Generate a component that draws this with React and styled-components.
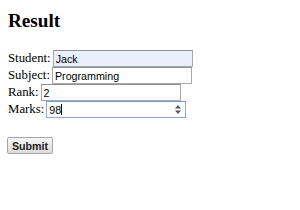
import React from "react";
import styled, { createGlobalStyle } from "styled-components";

const GlobalStyle = createGlobalStyle`
  html, body {
    margin: 0;
    background: #fff;
  }
  body {
    padding: 8px;
    font-family: "Liberation Serif", "Times New Roman", serif;
    font-size: 12.8px;
    color: #000;
  }
`;

const Title = styled.h2`
  margin: 2px 0 18px;
  font-size: 19.2px;
  line-height: 22px;
  font-weight: bold;
`;

const Form = styled.form`
  display: flex;
  flex-direction: column;
  align-items: flex-start;
`;

const Row = styled.div`
  display: flex;
  align-items: center;
  height: 17px;
  gap: 2px;
`;

const Label = styled.label`
  font-size: 12.8px;
  line-height: 15px;
`;

const FieldWrap = styled.span`
  position: relative;
  display: inline-flex;
`;

const Field = styled.input`
  box-sizing: border-box;
  width: 140px;
  height: 16.5px;
  margin: 0;
  padding: 0 2px;
  font-family: "Liberation Sans", Arial, sans-serif;
  font-size: 10.7px;
  color: #000;
  background: ${(p) => (p.$filled ? "#e8f0fe" : "#fff")};
  border: 1px solid ${(p) => (p.$active ? "#8ea6cf" : "#a9a9a9")};
  border-top-color: ${(p) => (p.$active ? "#7b9bd0" : "#8f8f8f")};
  border-radius: 0;
  outline: none;
  caret-color: transparent;
  -moz-appearance: textfield;

  &::-webkit-inner-spin-button,
  &::-webkit-outer-spin-button {
    -webkit-appearance: none;
    margin: 0;
  }
`;

const Spinner = styled.svg`
  position: absolute;
  right: 5px;
  top: 4px;
  width: 6px;
  height: 9px;
  pointer-events: none;
`;

const Caret = styled.span`
  position: absolute;
  left: 15px;
  top: 3px;
  width: 1px;
  height: 11px;
  background: #000;
  pointer-events: none;
`;

const SubmitButton = styled.button`
  margin-top: 19px;
  margin-left: -1px;
  box-sizing: border-box;
  width: 46px;
  height: 17px;
  padding: 0;
  font-family: "Liberation Sans", Arial, sans-serif;
  font-size: 10.7px;
  font-weight: bold;
  color: #222;
  background: linear-gradient(#f6f6f6, #dcdcdc);
  border: 1px solid #a6a6a6;
  border-radius: 2px;
`;

const fields = [
  { label: "Student:", value: "Jack", filled: true },
  { label: "Subject:", value: "Programming" },
  { label: "Rank:", value: "2" },
  { label: "Marks:", value: "98", type: "number", active: true },
];

export default function App() {
  return (
    <>
      <GlobalStyle />
      <Title>Result</Title>
      <Form onSubmit={(e) => e.preventDefault()}>
        {fields.map((f) => (
          <Row key={f.label}>
            <Label>{f.label}</Label>
            <FieldWrap>
              <Field
                type={f.type || "text"}
                defaultValue={f.value}
                $filled={f.filled}
                $active={f.active}
              />
              {f.active && <Caret />}
              {f.type === "number" && (
                <Spinner viewBox="0 0 6 9">
                  <path d="M3 0 L6 3.5 H0 Z M3 9 L6 5.5 H0 Z" fill="#555" />
                </Spinner>
              )}
            </FieldWrap>
          </Row>
        ))}
        <SubmitButton type="submit">Submit</SubmitButton>
      </Form>
    </>
  );
}
